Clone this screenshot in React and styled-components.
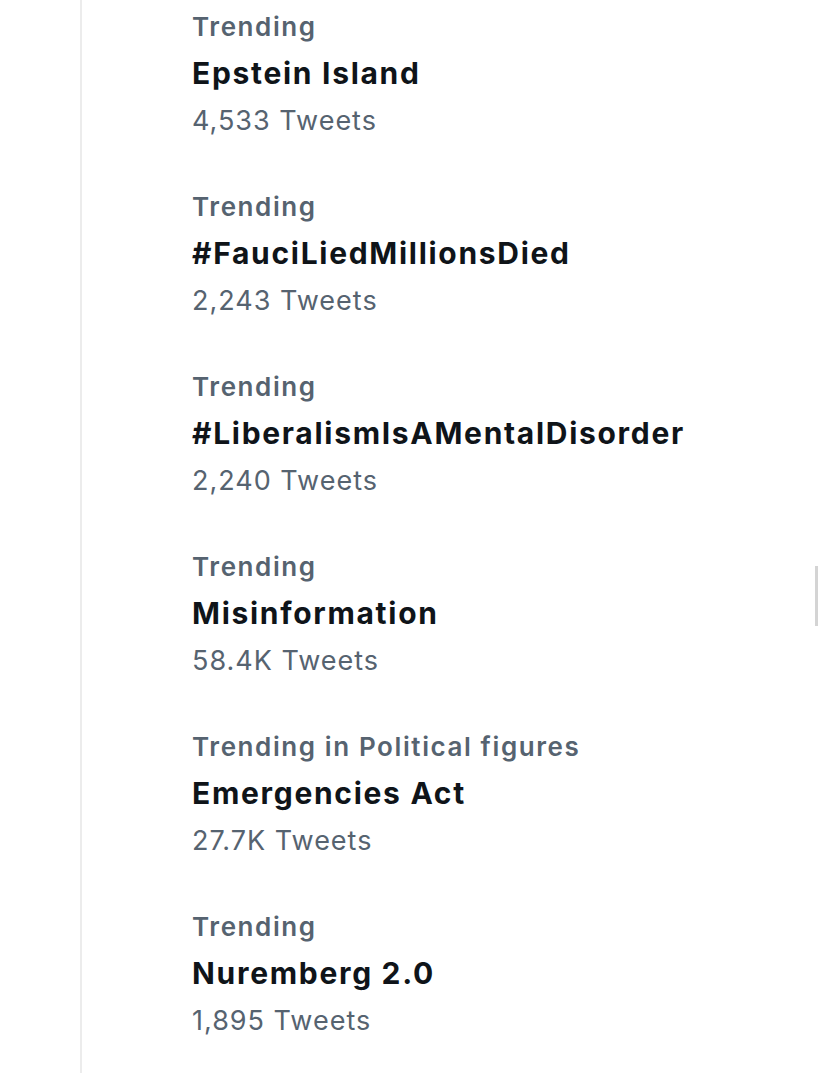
import React from "react";
import styled, { createGlobalStyle } from "styled-components";

const Global = createGlobalStyle`
  html, body { margin: 0; padding: 0; background: #ffffff; }
  body { font-family: Inter, "Open Sans", sans-serif; }
`;

const Page = styled.div`
  position: relative;
  width: 818px;
  height: 1073px;
  overflow: hidden;
  background: #fff;
`;

const Column = styled.div`
  margin-left: 80px;
  height: 100%;
  border-left: 2px solid #ececec;
  padding: 3px 0 0 110px;
  display: flex;
  flex-direction: column;
  gap: 39px;
`;

const Trend = styled.div`
  display: flex;
  flex-direction: column;
`;

const Label = styled.div`
  font-size: 26px;
  font-weight: 600;
  line-height: 47px;
  letter-spacing: 1.6px;
  color: #566370;
`;

const Title = styled.div`
  font-size: 30px;
  font-weight: 700;
  line-height: 47px;
  letter-spacing: 1.7px;
  color: #0f1419;
`;

const Count = styled.div`
  font-size: 27px;
  font-weight: 400;
  line-height: 47px;
  letter-spacing: 1px;
  color: #566370;
`;

const ScrollMark = styled.div`
  position: absolute;
  right: 0;
  top: 566px;
  width: 3px;
  height: 60px;
  background: #d4d4d4;
`;

const trends = [
  { label: "Trending", title: "Epstein Island", count: "4,533 Tweets" },
  { label: "Trending", title: "#FauciLiedMillionsDied", count: "2,243 Tweets" },
  { label: "Trending", title: "#LiberalismIsAMentalDisorder", count: "2,240 Tweets" },
  { label: "Trending", title: "Misinformation", count: "58.4K Tweets" },
  { label: "Trending in Political figures", title: "Emergencies Act", count: "27.7K Tweets" },
  { label: "Trending", title: "Nuremberg 2.0", count: "1,895 Tweets" },
];

export default function App() {
  return (
    <>
      <Global />
      <Page>
        <Column>
          {trends.map((t, i) => (
            <Trend key={i}>
              <Label>{t.label}</Label>
              <Title>{t.title}</Title>
              <Count>{t.count}</Count>
            </Trend>
          ))}
        </Column>
        <ScrollMark />
      </Page>
    </>
  );
}
